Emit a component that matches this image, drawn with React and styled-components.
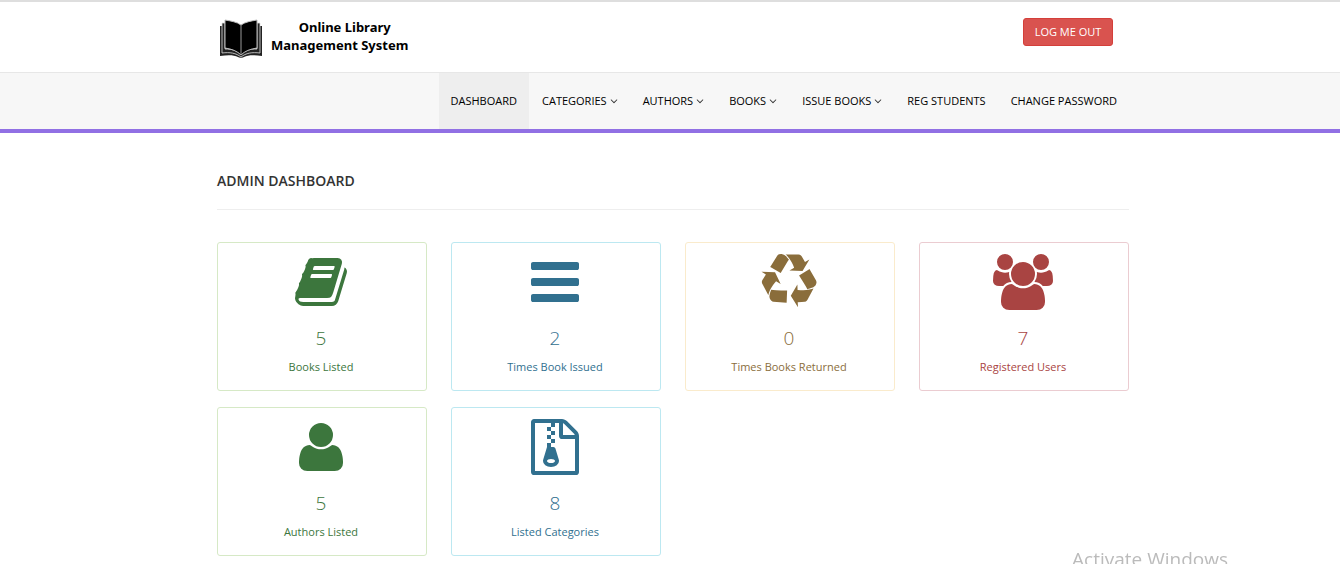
import React from "react";
import styled, { createGlobalStyle } from "styled-components";

const GlobalStyle = createGlobalStyle`
  * { box-sizing: border-box; }
  body {
    margin: 0;
    background: #fff;
    color: #333;
    font-family: "Open Sans", "Noto Sans", sans-serif;
    font-size: 11px;
    line-height: 16px;
  }
`;

const Container = styled.div`
  width: 100%;
  max-width: 918px;
  margin: 0 auto;
  padding-left: 6px;
`;

const Header = styled.header`
  border-top: 2px solid #dedede;
`;

const HeaderRow = styled(Container)`
  display: flex;
  justify-content: space-between;
  align-items: flex-start;
  padding-right: 16px;
  min-height: 70px;
  padding-top: 16px;
`;

const Brand = styled.a`
  display: flex;
  align-items: center;
  gap: 8px;
  padding-left: 2px;
  color: #000;
  text-decoration: none;
`;

const BrandName = styled.span`
  font-family: "Noto Sans", "Open Sans", sans-serif;
  font-size: 13px;
  font-weight: 700;
  line-height: 18px;
  text-align: center;
  padding-bottom: 6px;
`;

const BrandLine = styled.span`
  display: block;
  padding-left: ${(p) => (p.$indent ? "10px" : "0")};
`;

const LogoutButton = styled.button`
  height: 28px;
  min-width: 90px;
  padding: 0 10px;
  border: 1px solid #d43f3a;
  border-radius: 3px;
  background: #d9534f;
  color: #fff;
  font: 400 11px/16px "Open Sans", sans-serif;
  cursor: pointer;
`;

const NavBar = styled.nav`
  background: #f7f7f7;
  border-top: 1px solid #e7e7e7;
  border-bottom: 4px solid #9170e4;
`;

const NavList = styled.ul`
  display: flex;
  flex-wrap: wrap;
  justify-content: flex-end;
  gap: 1px;
  margin: 0;
  padding: 0;
  list-style: none;
`;

const NavLink = styled.a`
  display: flex;
  align-items: center;
  gap: 3px;
  padding: 20px 12px;
  background: ${(p) => (p.$active ? "#eee" : "transparent")};
  color: #000;
  text-decoration: none;
`;

const Main = styled.main`
  padding: 38px 0 6px;
`;

const PageTitle = styled.h1`
  margin: 0 0 32px;
  padding-bottom: 18px;
  border-bottom: 1px solid #eee;
  font-size: 14px;
  font-weight: 600;
  line-height: 20px;
`;

const CardGrid = styled.div`
  display: grid;
  grid-template-columns: repeat(4, 1fr);
  gap: 16px 24px;
`;

const tones = {
  success: { text: "#3c763d", border: "#d6e9c6" },
  info: { text: "#31708f", border: "#bce8f1" },
  warning: { text: "#8a6d3b", border: "#faebcc" },
  danger: { text: "#a94442", border: "#ebccd1" },
};

const Card = styled.section`
  display: flex;
  flex-direction: column;
  align-items: center;
  padding: 11px 13px 14px 11px;
  border: 1px solid ${(p) => tones[p.$tone].border};
  border-radius: 3px;
  color: ${(p) => tones[p.$tone].text};
`;

const CardIcon = styled.svg`
  display: block;
  height: 56px;
  fill: currentColor;
`;

const CardValue = styled.h2`
  margin: 16px 0 8px;
  font-size: 19px;
  font-weight: 300;
  line-height: 24px;
`;

const CardLabel = styled.p`
  margin: 0;
  line-height: 18px;
`;

const Watermark = styled.div`
  position: fixed;
  right: 112px;
  bottom: -9px;
  color: #bbb;
  font-size: 19px;
  line-height: 28px;
  pointer-events: none;
`;

const USERS_BODY =
  "M1664 1533q0 120-73 189.5t-194 69.5h-874q-121 0-194-69.5t-73-189.5q0-53 3.5-103.5t14-109 26.5-108.5 43-97.5 62-81 85.5-53.5 111.5-20q10 0 43 21.5t73 48 107 48 135 21.5 135-21.5 107-48 73-48 43-21.5q61 0 111.5 20t85.5 53.5 62 81 43 97.5 26.5 108.5 14 109 3.5 103.5z";
const USERS_HEAD =
  "M1344 640q0 159-112.5 271.5t-271.5 112.5-271.5-112.5-112.5-271.5 112.5-271.5 271.5-112.5 271.5 112.5 112.5 271.5z";

const icons = {
  book: {
    box: "0 0 1792 1792",
    width: 56,
    d: "M1703 478q40 57 18 129l-275 906q-19 64-76.5 107.5t-122.5 43.5h-923q-77 0-148.5-53.5t-99.5-131.5q-24-67-2-127 0-4 3-27t4-37q1-8-3-21.5t-3-19.5q2-11 8-21t16.5-23.5 16.5-23.5q23-38 45-91.5t30-91.5q3-10 .5-30t-.5-28q3-11 17-28t17-23q21-36 42-92t25-90q1-9-2.5-32t.5-28q4-13 22-30.5t22-22.5q19-26 42.5-84.5t27.5-96.5q1-8-3-25.5t-2-26.5q2-8 9-18t18-23 17-21q8-12 16.5-30.5t15-35 16-36 19.5-32 26.5-23.5 36-11.5 47.5 5.5l-1 3q38-9 51-9h761q74 0 114 56t18 130l-274 906q-36 119-71.5 153.5t-128.5 34.5h-869q-27 0-38 15-11 16-1 43 24 70 144 70h923q29 0 56-15.5t35-41.5l300-987q7-22 5-57 38 15 59 43zm-1064 2q-4 13 2 22.5t20 9.5h608q13 0 25.5-9.5t16.5-22.5l21-64q4-13-2-22.5t-20-9.5h-608q-13 0-25.5 9.5t-16.5 22.5zm-83 256q-4 13 2 22.5t20 9.5h608q13 0 25.5-9.5t16.5-22.5l21-64q4-13-2-22.5t-20-9.5h-608q-13 0-25.5 9.5t-16.5 22.5z",
  },
  bars: {
    box: "128 0 1536 1792",
    width: 48,
    d: "M1664 1344v128q0 26-19 45t-45 19h-1408q-26 0-45-19t-19-45v-128q0-26 19-45t45-19h1408q26 0 45 19t19 45zm0-512v128q0 26-19 45t-45 19h-1408q-26 0-45-19t-19-45v-128q0-26 19-45t45-19h1408q26 0 45 19t19 45zm0-512v128q0 26-19 45t-45 19h-1408q-26 0-45-19t-19-45v-128q0-26 19-45t45-19h1408q26 0 45 19t19 45z",
  },
  recycle: {
    box: "0 0 1792 1792",
    width: 56,
    d: "M836 1169l-15 368-2 22-420-29q-36-3-67-31.5t-47-65.5q-11-27-14.5-55t4-65 12-55 21.5-64 19-53q78 12 509 28zm-387-586l180 379-147-92q-63 72-111.5 144.5t-72.5 125-39.5 94.5-18.5 63l-4 21-190-357q-17-26-18-56t6-47l8-18q35-63 114-188l-140-86zm1231 517l-188 359q-12 29-36.5 46.5t-43.5 20.5l-18 4q-71 7-219 12l8 164-230-367 211-362 7 173q170 16 283 5t170-33zm-785-924q-47 63-265 435l-317-187-19-12 225-356q20-31 60-45t80-10q24 2 48.5 12t42 21 41.5 33 36 34.5 36 39.5 32 35zm655 307l212 363q18 37 12.5 76t-27.5 74q-13 20-33 37t-38 28-48.5 22-47 16-51.5 14-46 12q-34-72-265-436l313-195zm-143-226l142-83-220 373-419-20 151-86q-34-89-75-166t-75.5-123.5-64.5-80-47-46.5l-17-13 405 1q31-3 58 10.5t39 28.5l11 15q39 61 112 190z",
  },
  users: {
    box: "0 0 1920 1792",
    width: 60,
    d:
      USERS_BODY +
      USERS_HEAD +
      "M593 896q-162 5-265 128h-134q-82 0-138-40.5t-56-118.5q0-353 124-353 6 0 43.5 21t97.5 42.5 119 21.5q67 0 133-23-5 37-5 66 0 139 81 256zM640 256q0 106-75 181t-181 75-181-75-75-181 75-181 181-75 181 75 75 181zM1920 865q0 78-56 118.5t-138 40.5h-134q-103-123-265-128 81-117 81-256 0-29-5-66 66 23 133 23 59 0 119-21.5t97.5-42.5 43.5-21q124 0 124 353zm-128-609q0 106-75 181t-181 75-181-75-75-181 75-181 181-75 181 75 75 181z",
  },
  user: {
    box: "256 128 1408 1792",
    width: 44,
    d: USERS_BODY + USERS_HEAD,
  },
  archive: {
    box: "128 0 1536 1792",
    width: 48,
    d: "M768 384v-128h-128v128h128zm128 128v-128h-128v128h128zm-128 128v-128h-128v128h128zm128 128v-128h-128v128h128zm700-388q28 28 48 76t20 88v1152q0 40-28 68t-68 28h-1344q-40 0-68-28t-28-68v-1600q0-40 28-68t68-28h896q40 0 88 20t76 48zm-444-244v376h376q-10-29-22-41l-313-313q-12-12-41-22zm384 1528v-1024h-416q-40 0-68-28t-28-68v-416h-128v128h-128v-128h-512v1536h1280zm-627-721l107 349q8 27 8 52 0 83-72.5 137.5t-183.5 54.5-183.5-54.5-72.5-137.5q0-25 8-52 21-63 120-396v-128h128v128h79q22 0 39 13t23 34zm-141 465q53 0 90.5-19t37.5-45-37.5-45-90.5-19-90.5 19-37.5 45 37.5 45 90.5 19z",
  },
};

const navItems = [
  { label: "DASHBOARD", active: true },
  { label: "CATEGORIES", menu: true },
  { label: "AUTHORS", menu: true },
  { label: "BOOKS", menu: true },
  { label: "ISSUE BOOKS", menu: true },
  { label: "REG STUDENTS" },
  { label: "CHANGE PASSWORD" },
];

const stats = [
  { icon: "book", tone: "success", value: 5, label: "Books Listed" },
  { icon: "bars", tone: "info", value: 2, label: "Times Book Issued" },
  { icon: "recycle", tone: "warning", value: 0, label: "Times Books Returned" },
  { icon: "users", tone: "danger", value: 7, label: "Registered Users" },
  { icon: "user", tone: "success", value: 5, label: "Authors Listed" },
  { icon: "archive", tone: "info", value: 8, label: "Listed Categories" },
];

function BookLogo() {
  return (
    <svg width="44" height="40" viewBox="0 0 44 40" aria-hidden="true">
      <path d="M1 7h3v26c7-1 13 0 18 4 5-4 11-5 18-4V7h3v30c-8-1-14-1-18 1-1 1-5 1-6 0-4-2-10-2-18-1z" fill="#222" />
      <path d="M3 4h3v26c7 0 12 1 16 6 4-5 9-6 16-6V4h3v30c-8-1-14 0-19 4-5-4-11-5-19-4z" fill="#222" stroke="#ddd" strokeWidth="0.8" />
      <path d="M6 1c6 1 12 2 16 5 4-3 10-4 16-5v28c-7 1-12 3-16 7-4-4-9-6-16-7z" fill="#000" stroke="#bbb" strokeWidth="1" />
      <path d="M22 6v30" stroke="#999" strokeWidth="1" />
    </svg>
  );
}

function AngleDown() {
  return (
    <svg width="8" height="12" viewBox="299 0 1194 1792" fill="#333" aria-hidden="true">
      <path d="M1395 736q0 13-10 23l-466 466q-10 10-23 10t-23-10l-466-466q-10-10-10-23t10-23l50-50q10-10 23-10t23 10l393 393 393-393q10-10 23-10t23 10l50 50q10 10 10 23z" />
    </svg>
  );
}

function StatCard({ icon, tone, value, label }) {
  const { box, width, d } = icons[icon];
  return (
    <Card $tone={tone}>
      <CardIcon width={width} viewBox={box} aria-hidden="true">
        <path d={d} />
      </CardIcon>
      <CardValue>{value}</CardValue>
      <CardLabel>{label}</CardLabel>
    </Card>
  );
}

export default function App() {
  return (
    <>
      <GlobalStyle />
      <Header>
        <HeaderRow>
          <Brand href="#">
            <BookLogo />
            <BrandName>
              <BrandLine $indent>Online Library</BrandLine>
              <BrandLine>Management System</BrandLine>
            </BrandName>
          </Brand>
          <LogoutButton type="button">LOG ME OUT</LogoutButton>
        </HeaderRow>
      </Header>
      <NavBar>
        <Container>
          <NavList>
            {navItems.map((item) => (
              <li key={item.label}>
                <NavLink href="#" $active={item.active}>
                  {item.label}
                  {item.menu && <AngleDown />}
                </NavLink>
              </li>
            ))}
          </NavList>
        </Container>
      </NavBar>
      <Main>
        <Container>
          <PageTitle>ADMIN DASHBOARD</PageTitle>
          <CardGrid>
            {stats.map((stat) => (
              <StatCard key={stat.label} {...stat} />
            ))}
          </CardGrid>
        </Container>
      </Main>
      <Watermark>Activate Windows</Watermark>
    </>
  );
}
